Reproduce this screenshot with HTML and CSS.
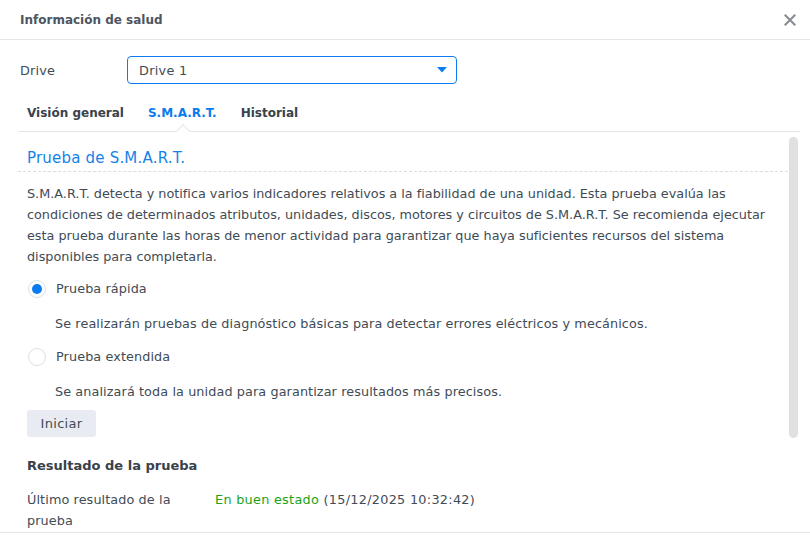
FILE: index.html
```html
<!DOCTYPE html>
<html lang="es">

<head>
    <meta charset="UTF-8">
    <title>Información de salud</title>
    <link rel="stylesheet" href="styles.css">
</head>

<body>
    <div class="dialog">
        <div class="header">
            <span class="title">Información de salud</span>
            <span class="close">
                <svg width="12" height="12" viewBox="0 0 12 12">
                    <path d="M1.5 1.5 L10.5 10.5 M10.5 1.5 L1.5 10.5" stroke="#8a8f96" stroke-width="2.2" stroke-linecap="square" />
                </svg>
            </span>
        </div>

        <div class="body">
            <div class="field">
                <label class="field-label">Drive</label>
                <div class="select">
                    <span>Drive 1</span>
                    <svg width="10" height="6" viewBox="0 0 10 6">
                        <path d="M0 0 H10 L5 5.5 Z" fill="#0a7cf0" />
                    </svg>
                </div>
            </div>

            <div class="tabs">
                <span class="tab">Visión general</span>
                <span class="tab active">S.M.A.R.T.</span>
                <span class="tab">Historial</span>
            </div>

            <div class="panel">
                <div class="scrollbar"></div>

                <h2 class="section-title">Prueba de S.M.A.R.T.</h2>

                <p class="desc">S.M.A.R.T. detecta y notifica varios indicadores relativos a la fiabilidad de una unidad. Esta prueba evalúa las<br>
                    condiciones de determinados atributos, unidades, discos, motores y circuitos de S.M.A.R.T. Se recomienda ejecutar<br>
                    esta prueba durante las horas de menor actividad para garantizar que haya suficientes recursos del sistema<br>
                    disponibles para completarla.</p>

                <div class="option">
                    <span class="radio checked"></span>
                    <span>Prueba rápida</span>
                </div>
                <p class="hint">Se realizarán pruebas de diagnóstico básicas para detectar errores eléctricos y mecánicos.</p>

                <div class="option">
                    <span class="radio"></span>
                    <span>Prueba extendida</span>
                </div>
                <p class="hint">Se analizará toda la unidad para garantizar resultados más precisos.</p>

                <button class="btn">Iniciar</button>

                <h3 class="sub-title">Resultado de la prueba</h3>

                <div class="result">
                    <span class="result-label">Último resultado de la prueba</span>
                    <span class="result-value"><span class="good">En buen estado</span> (15/12/2025 10:32:42)</span>
                </div>
            </div>
        </div>

        <div class="footer"></div>
    </div>
</body>

</html>
```

FILE: styles.css
```css
* {
    margin: 0;
    padding: 0;
    box-sizing: border-box;
}

body {
    font-family: "DejaVu Sans", Verdana, sans-serif;
    font-size: 12.8px;
    color: #414b55;
    background: #ffffff;
}

.dialog {
    width: 810px;
    height: 541px;
    overflow: hidden;
}

.header {
    height: 40px;
    display: flex;
    align-items: center;
    justify-content: space-between;
    padding: 0 14px 0 20px;
    border-bottom: 1px solid #e3e7eb;
}

.title {
    font-weight: bold;
    font-size: 12px;
    color: #4d5660;
}

.close {
    display: flex;
}

.body {
    height: 492px;
    overflow: hidden;
    padding: 16px 10px 0 18px;
}

.footer {
    border-top: 1px solid #e3e7eb;
}

.field {
    display: flex;
    align-items: center;
    height: 28px;
}

.field-label {
    width: 109px;
    padding-left: 2px;
    letter-spacing: 0.2px;
}

.select {
    width: 330px;
    height: 28px;
    display: flex;
    align-items: center;
    justify-content: space-between;
    padding: 0 9px 0 11px;
    border: 1px solid #0a7cf0;
    border-radius: 4px;
    letter-spacing: 0.3px;
}

.tabs {
    position: relative;
    display: flex;
    gap: 24px;
    padding: 21px 0 9px 9px;
    border-bottom: 1px solid #e3e7eb;
}

.tab {
    font-weight: bold;
    font-size: 12px;
    color: #39424b;
    line-height: 17px;
}

.tab.active {
    position: relative;
    color: #0a7cf0;
}

.tab.active::after {
    content: "";
    position: absolute;
    left: 50%;
    bottom: -14px;
    width: 9px;
    height: 9px;
    margin-left: -4px;
    background: #ffffff;
    border-left: 1px solid #e3e7eb;
    border-top: 1px solid #e3e7eb;
    transform: rotate(45deg);
}

.panel {
    position: relative;
    padding: 0 0 0 9px;
}

.scrollbar {
    position: absolute;
    right: 2px;
    top: 5px;
    width: 9px;
    height: 301px;
    border-radius: 5px;
    background: #e0e0e0;
}

.section-title {
    font-size: 15px;
    letter-spacing: 0.2px;
    font-weight: normal;
    color: #1582ea;
    padding: 17px 0 4px 9px;
    margin: 0 12px 0 -9px;
    border-bottom: 1px dashed #d8dee4;
}

.desc {
    line-height: 21px;
    padding-top: 11px;
    margin-right: -4px;
    white-space: nowrap;
}

.option {
    display: flex;
    align-items: center;
    gap: 10px;
    margin-top: 11px;
    height: 21px;
    padding-left: 1px;
    letter-spacing: 0.1px;
}

.radio {
    width: 18px;
    height: 18px;
    border-radius: 50%;
    border: 1px solid #dbe1e7;
    background: #ffffff;
    display: flex;
    align-items: center;
    justify-content: center;
}

.radio.checked::after {
    content: "";
    width: 10px;
    height: 10px;
    border-radius: 50%;
    background: #0a7cf0;
}

.hint {
    line-height: 21px;
    padding-left: 28px;
    margin-top: 14px;
    letter-spacing: 0.1px;
}

.hint + .option {
    margin-top: 12px;
}

.btn {
    display: block;
    margin-top: 8px;
    width: 69px;
    height: 27px;
    border: none;
    border-radius: 3px;
    background: #e8ecf2;
    color: #414b55;
    font-family: inherit;
    font-size: 13px;
    letter-spacing: 0.3px;
}

.sub-title {
    font-size: 13px;
    font-weight: bold;
    color: #39424b;
    margin-top: 20px;
    line-height: 17px;
}

.result {
    display: grid;
    grid-template-columns: 188px 1fr;
    margin-top: 15px;
    line-height: 21px;
    letter-spacing: 0.1px;
}

.result-label {
    width: 160px;
}

.result-value {
    letter-spacing: 0.3px;
}

.good {
    color: #1aa31a;
}
```
